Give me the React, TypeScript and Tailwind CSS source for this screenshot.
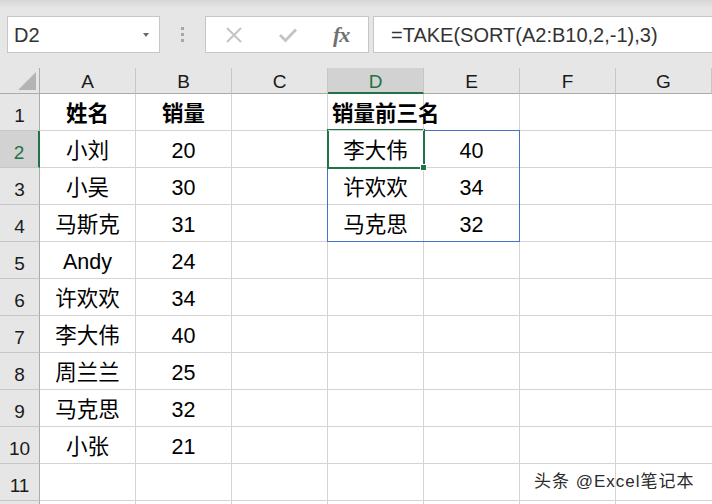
import React from "react";

const cols = ["A", "B", "C", "D", "E", "F", "G"];

type Cell = { t: string; bold?: boolean; align?: "left" | "center" };

const data: Record<number, Record<string, Cell>> = {
  1: { A: { t: "姓名", bold: true }, B: { t: "销量", bold: true }, D: { t: "销量前三名", bold: true, align: "left" } },
  2: { A: { t: "小刘" }, B: { t: "20" }, D: { t: "李大伟" }, E: { t: "40" } },
  3: { A: { t: "小吴" }, B: { t: "30" }, D: { t: "许欢欢" }, E: { t: "34" } },
  4: { A: { t: "马斯克" }, B: { t: "31" }, D: { t: "马克思" }, E: { t: "32" } },
  5: { A: { t: "Andy" }, B: { t: "24" } },
  6: { A: { t: "许欢欢" }, B: { t: "34" } },
  7: { A: { t: "李大伟" }, B: { t: "40" } },
  8: { A: { t: "周兰兰" }, B: { t: "25" } },
  9: { A: { t: "马克思" }, B: { t: "32" } },
  10: { A: { t: "小张" }, B: { t: "21" } },
  11: {},
  12: {},
};

const font = "font-['Liberation_Sans','Noto_Sans_CJK_SC',sans-serif]";

function Toolbar() {
  return (
    <div className="h-[68px] flex items-start pt-[16px] bg-[linear-gradient(#d6d6d6,#e6e6e6_8px)]">
      {/* name box */}
      <div className="ml-[7px] w-[153px] h-[37px] bg-white border border-[#c6c6c6] flex items-center pl-[6px] pr-[10px]">
        <span className="flex-1 text-[20px] text-[#333] leading-none">D2</span>
        <span className="w-0 h-0 border-l-[3.5px] border-r-[3.5px] border-t-[4px] border-l-transparent border-r-transparent border-t-[#6b6b6b]" />
      </div>
      {/* grip dots */}
      <div className="w-[45px] h-[37px] flex flex-col items-center justify-center gap-[3px]">
        <span className="w-[3px] h-[3px] bg-[#a6a6a6]" />
        <span className="w-[3px] h-[3px] bg-[#a6a6a6]" />
        <span className="w-[3px] h-[3px] bg-[#a6a6a6]" />
      </div>
      {/* cancel / enter / fx */}
      <div className="w-[164px] h-[37px] bg-white border border-[#c6c6c6] flex items-center">
        <div className="w-[54px] flex justify-center ml-[1px]">
          <svg width="18" height="18" viewBox="0 0 18 18">
            <path d="M2 2 L16 16 M16 2 L2 16" stroke="#c4c4c4" strokeWidth="2" fill="none" />
          </svg>
        </div>
        <div className="w-[54px] flex justify-center">
          <svg width="20" height="16" viewBox="0 0 20 16">
            <path d="M2 8 L7.5 13.5 L18 2.5" stroke="#c4c4c4" strokeWidth="2.8" fill="none" />
          </svg>
        </div>
        <div className="w-[54px] flex justify-center">
          <span className="font-['Liberation_Serif',serif] italic font-bold text-[22px] text-[#707070] leading-none tracking-[-1px]">fx</span>
        </div>
      </div>
      {/* formula input */}
      <div className="ml-[4px] flex-1 h-[37px] bg-white border border-r-0 border-[#c6c6c6] flex items-center pl-[17px]">
        <span className="text-[20px] text-[#333] leading-none">=TAKE(SORT(A2:B10,2,-1),3)</span>
      </div>
    </div>
  );
}

function HeaderRow() {
  return (
    <div className="flex h-[26px] bg-[#e6e6e6]">
      <div className="w-[40px] h-[26px] border-r border-b border-[#ababab] relative shrink-0">
        <svg className="absolute left-[18px] top-[4px]" width="18" height="18" viewBox="0 0 18 18">
          <path d="M18 0 L18 18 L0 18 Z" fill="#b4b4b4" />
        </svg>
      </div>
      {cols.map((c) => {
        const sel = c === "D";
        return (
          <div
            key={c}
            className={
              sel
                ? "w-[96px] shrink-0 h-[26px] bg-[#d2d2d2] border-r border-[#c6c6c6] border-b-2 border-b-[#217346] flex items-center justify-center text-[19px] leading-none text-[#217346] pt-[2px]"
                : "w-[96px] shrink-0 h-[26px] border-r border-b border-[#c6c6c6] border-b-[#ababab] flex items-center justify-center text-[19px] leading-none text-[#1a1a1a] pt-[1px]"
            }
          >
            {c}
          </div>
        );
      })}
    </div>
  );
}

function Row({ n }: { n: number }) {
  const sel = n === 2;
  const row = data[n] || {};
  return (
    <div className="flex h-[37px]">
      <div
        className={
          sel
            ? "w-[40px] shrink-0 h-[37px] bg-[#d2d2d2] border-r-2 border-r-[#217346] border-b border-b-[#c6c6c6] flex items-center justify-center text-[19px] leading-none text-[#217346] pt-[7px]"
            : "w-[40px] shrink-0 h-[37px] bg-[#e6e6e6] border-r border-r-[#ababab] border-b border-b-[#c6c6c6] flex items-center justify-center text-[19px] leading-none text-[#1a1a1a] pt-[7px]"
        }
      >
        {n < 12 ? n : ""}
      </div>
      {cols.map((c, i) => {
        const cell = row[c];
        return (
          <div
            key={c}
            className={
              "shrink-0 h-[37px] border-r border-b border-[#d4d4d4] flex items-center text-[21.5px] leading-none text-black whitespace-nowrap pt-[6px] " +
              (i === 6 ? "w-[97px] " : "w-[96px] ") +
              (cell?.align === "left" ? "justify-start pl-[4px] overflow-visible relative z-10 " : "justify-center ") +
              (cell?.bold ? "font-bold" : "")
            }
          >
            {cell?.t}
          </div>
        );
      })}
    </div>
  );
}

export default function App() {
  const rows = [1, 2, 3, 4, 5, 6, 7, 8, 9, 10, 11, 12];
  return (
    <div className={"w-[712px] h-[504px] overflow-hidden relative bg-[#e6e6e6] " + font}>
      <Toolbar />
      <div className="bg-white relative">
        <HeaderRow />
        {rows.map((n) => (
          <Row key={n} n={n} />
        ))}
        {/* range outline D2:E4 */}
        <div className="absolute left-[327px] top-[62px] w-[193px] h-[112px] border border-[#4472c4] pointer-events-none" />
        {/* active cell D2 */}
        <div className="absolute left-[327px] top-[61px] w-[98px] h-[40px] border-2 border-[#217346] pointer-events-none" />
        <div className="absolute left-[420px] top-[96px] w-[7px] h-[7px] bg-[#217346] border border-white pointer-events-none" />
      </div>
      {/* watermark */}
      <div className="absolute left-[534px] top-[469px] text-[17px] tracking-[1px] text-[#2b2b2b] whitespace-nowrap [text-shadow:0_0_2px_#fff,0_0_2px_#fff]">
        头条 @Excel笔记本
      </div>
    </div>
  );
}
